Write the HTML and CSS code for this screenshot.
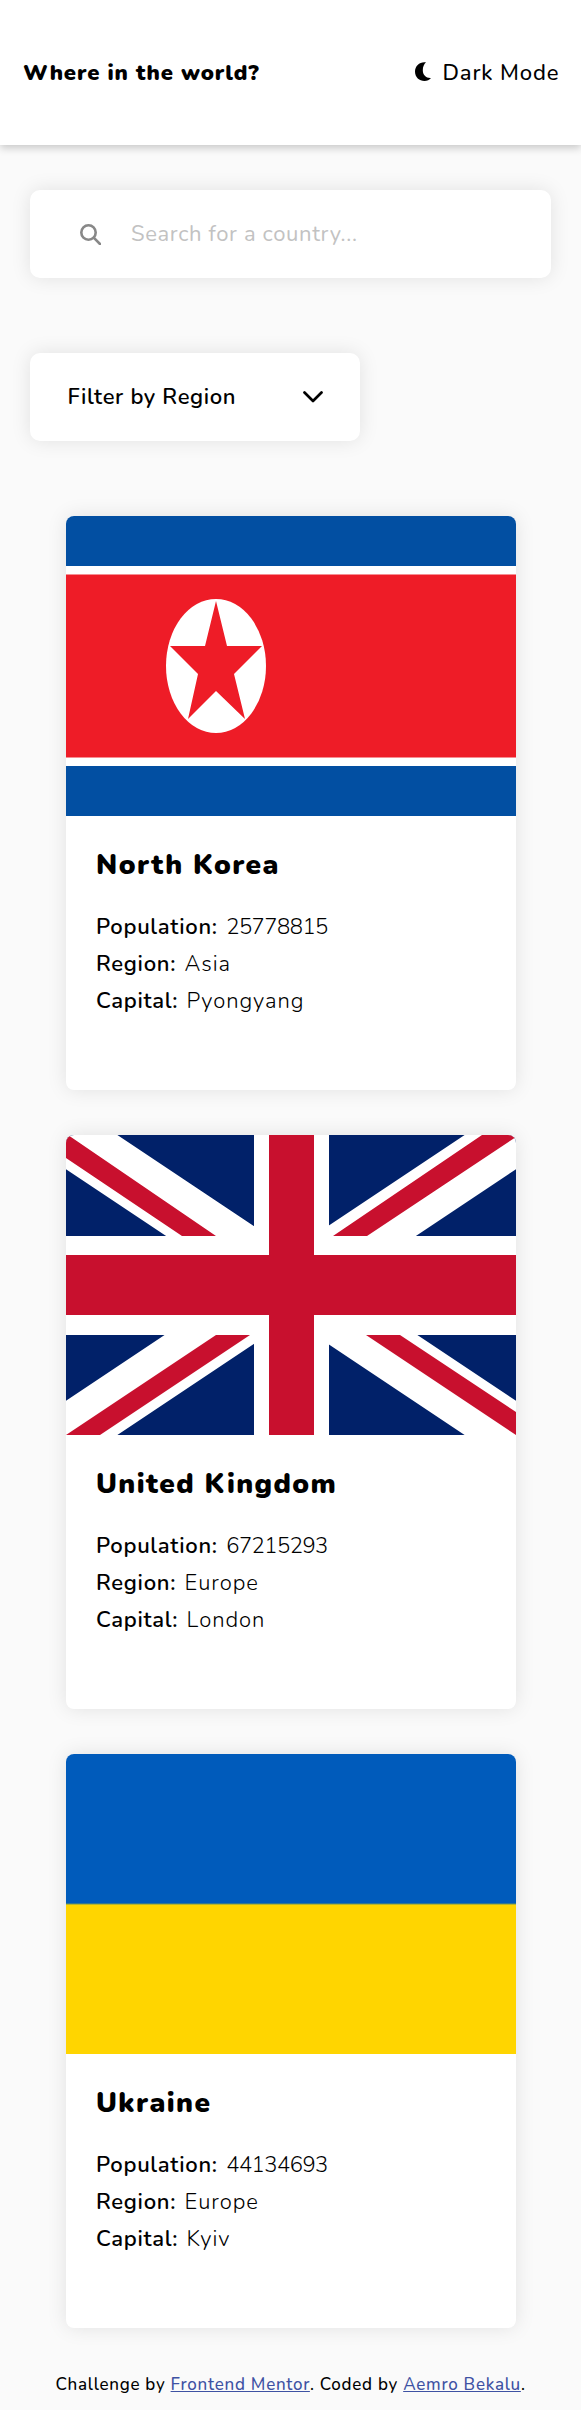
FILE: index.html
```html
<!DOCTYPE html>
<html lang="en">
<head>
<meta charset="utf-8">
<title>Where in the world?</title>
<link rel="stylesheet" href="styles.css">
</head>
<body>
<header class="header">
  <h1 class="brand">Where in the world?</h1>
  <button class="theme" type="button">
    <svg class="moon" viewBox="0 0 16 19"><path d="M11 .3C5-.7 0 3.800 0 9.500S4.300 19 9.500 19c2.600 0 5-.9 6.500-3C11.500 16.500 7.800 13.300 7.800 8.300 7.800 5 9 2.100 11 .3Z"/></svg>
    <span>Dark Mode</span>
  </button>
</header>
<main class="main">
  <label class="search">
    <svg class="lens" viewBox="0 0 21 21"><circle cx="8.500" cy="8.500" r="7.200"/><path d="M13.700 13.700 20 20"/></svg>
    <input class="search-input" type="text" placeholder="Search for a country...">
  </label>
  <button class="filter" type="button">
    <span>Filter by Region</span>
    <svg class="chevron" viewBox="0 0 20 12"><path d="m1.500 1.500 8.500 8.500 8.500-8.500"/></svg>
  </button>
  <section class="cards">
    <article class="card">
      <svg class="flag" viewBox="0 0 450 300">
        <path fill="#024fa2" d="M0 0h450v300H0z"/>
        <path fill="#fff" d="M0 50h450v200H0z"/>
        <path fill="#ee1c27" d="M0 58.500h450v183H0z"/>
        <ellipse cx="150" cy="150" rx="50" ry="67" fill="#fff"/>
        <path fill="#ee1c27" d="m150 85 11 45h35l-28 28 11 45-29-28-28 28 10-45-28-28h35z"/>
      </svg>
      <div class="info">
        <h2 class="name">North Korea</h2>
        <p class="fact"><b>Population:</b><span class="number">25778815</span></p>
        <p class="fact"><b>Region:</b><span>Asia</span></p>
        <p class="fact"><b>Capital:</b><span>Pyongyang</span></p>
      </div>
    </article>
    <article class="card">
      <svg class="flag" viewBox="0 0 450 300">
        <path fill="#012169" d="M0 0h450v300H0z"/>
        <path stroke="#fff" stroke-width="57" d="M0 0l450 300M450 0 0 300"/>
        <path fill="#c8102e" d="M0 0h2l148 101h-34L0 23zM450 0h-34L267 101h34L450 2zM0 300h34l150-100h-34zM450 300v-23L334 200h-34z"/>
        <path fill="#fff" d="M188 0h75v300h-75zM0 101h450v99H0z"/>
        <path fill="#c8102e" d="M203 0h45v300h-45zM0 120h450v60H0z"/>
      </svg>
      <div class="info">
        <h2 class="name">United Kingdom</h2>
        <p class="fact"><b>Population:</b><span class="number">67215293</span></p>
        <p class="fact"><b>Region:</b><span>Europe</span></p>
        <p class="fact"><b>Capital:</b><span>London</span></p>
      </div>
    </article>
    <article class="card">
      <svg class="flag" viewBox="0 0 450 300">
        <path fill="#005bbb" d="M0 0h450v150H0z"/>
        <path fill="#ffd500" d="M0 150h450v150H0z"/>
        <path fill="#6c955f" d="M0 149.500h450v1H0z"/>
      </svg>
      <div class="info">
        <h2 class="name">Ukraine</h2>
        <p class="fact"><b>Population:</b><span class="number">44134693</span></p>
        <p class="fact"><b>Region:</b><span>Europe</span></p>
        <p class="fact"><b>Capital:</b><span>Kyiv</span></p>
      </div>
    </article>
  </section>
</main>
<footer class="footer">Challenge by <a href="#">Frontend Mentor</a>. Coded by <a href="#">Aemro Bekalu</a>.</footer>
</body>
</html>
```
FILE: styles.css
```css
* { box-sizing: border-box; margin: 0; padding: 0; }
body {
  background: #fafafa;
  color: #000;
  font-family: Nunito, "Open Sans", "Noto Sans", sans-serif;
  font-size: 22px;
}
button { border: 0; background: none; color: inherit; font: inherit; }
svg { display: block; flex: none; }
.header {
  display: flex;
  align-items: center;
  justify-content: space-between;
  height: 145px;
  padding: 0 21.5px 0 23px;
  background: #fff;
  box-shadow: 0 3px 8px rgba(0, 0, 0, .2);
}
.brand { font-size: 22px; font-weight: 900; letter-spacing: .88px; }
.theme { display: flex; align-items: center; gap: 11px; font-weight: 500; letter-spacing: .9px; }
.moon { width: 16px; height: 19px; margin-top: -2px; }
.main { padding: 45px 30px 0; }
.search {
  display: flex;
  align-items: center;
  gap: 30px;
  height: 88px;
  padding-left: 50px;
  border-radius: 10px;
  background: #fff;
  box-shadow: 0 0 20px rgba(0, 0, 0, .1);
}
.lens { width: 21px; height: 21px; fill: none; stroke: #888; stroke-width: 2.6; stroke-linecap: round; }
.search-input {
  width: 380px;
  border: 0;
  outline: 0;
  background: none;
  font: inherit;
  letter-spacing: .65px;
}
.search-input::placeholder { color: #c2c2c2; }
.filter {
  display: flex;
  align-items: center;
  justify-content: space-between;
  width: 330px;
  height: 88px;
  margin-top: 75px;
  padding: 0 37.5px;
  border-radius: 10px;
  background: #fff;
  box-shadow: 0 0 20px rgba(0, 0, 0, .1);
  font-weight: 600;
  letter-spacing: .64px;
}
.chevron { width: 20px; height: 12px; fill: none; stroke: #000; stroke-width: 2.7; stroke-linecap: round; stroke-linejoin: round; }
.cards { display: flex; flex-direction: column; align-items: center; gap: 45px; margin-top: 75px; }
.card {
  width: 450px;
  height: 574px;
  overflow: hidden;
  border-radius: 8px;
  background: #fff;
  box-shadow: 0 0 20px rgba(0, 0, 0, .1);
}
.flag { width: 450px; height: 300px; }
.info { padding: 29.5px 30px 0 30.5px; }
.name { margin-bottom: 25.5px; font-size: 28px; font-weight: 900; line-height: 38px; letter-spacing: 1.42px; }
.fact { display: flex; gap: 8.5px; line-height: 37px; font-weight: 300; letter-spacing: .95px; }
.fact b { font-weight: 600; letter-spacing: .7px; }
.fact .number { letter-spacing: -.5px; }
.footer {
  margin-top: 43px;
  font-size: 17px;
  font-weight: 500;
  line-height: 28px;
  letter-spacing: .72px;
  text-align: center;
  white-space: nowrap;
}
.footer a { color: #3e52a3; }
```
